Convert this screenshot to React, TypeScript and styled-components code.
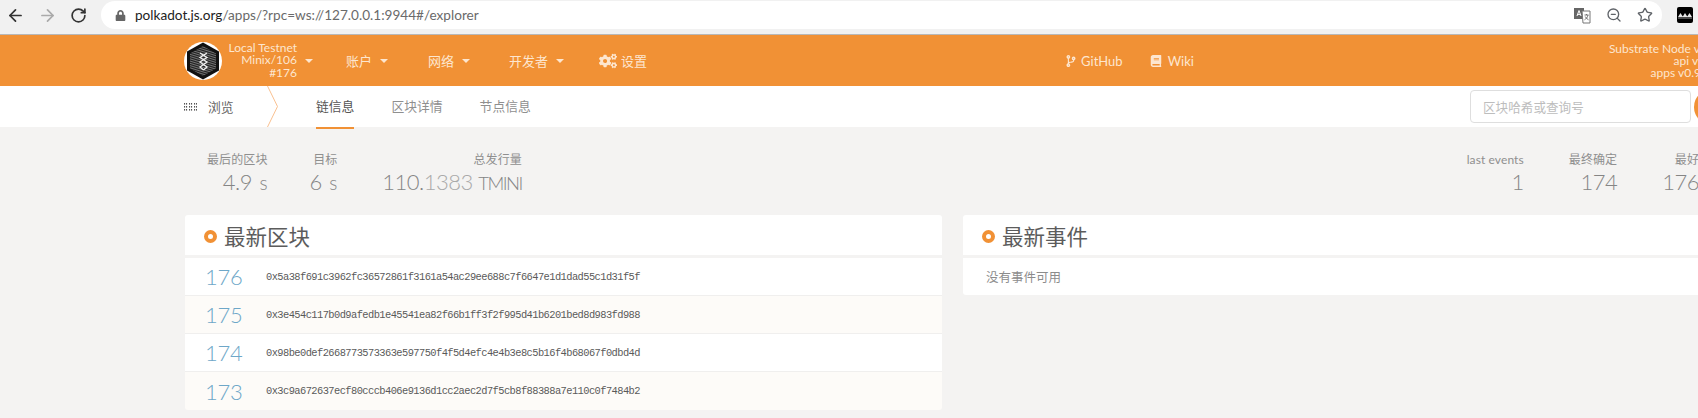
import React from "react";
import styled, { createGlobalStyle } from "styled-components";
import { ArrowLeft, ArrowRight, RotateCw, ZoomOut, Star } from "lucide-react";
import { FaLock, FaCogs, FaCodeBranch, FaBook } from "react-icons/fa";

const Global = createGlobalStyle`
  html, body { margin: 0; padding: 0; background: #f4f3f2; overflow: hidden; }
  body { font-family: Lato, "Noto Sans CJK SC", sans-serif; }
`;

const Frame = styled.div`
  width: 1698px;
  height: 418px;
  overflow: hidden;
  background: #f4f3f2;
`;

const BrowserBar = styled.div`
  display: flex;
  align-items: flex-start;
  height: 34px;
  background: #f1f1f1;
  border-bottom: 1px solid #b8b8b8;
  box-sizing: content-box;
`;

const NavButtons = styled.div`
  display: flex;
  align-items: center;
  height: 30px;
  width: 101px;
  padding-left: 6px;
  gap: 13px;
  box-sizing: border-box;
`;

const Omnibox = styled.div`
  display: flex;
  align-items: center;
  width: 1561px;
  height: 28px;
  margin-top: 1px;
  border-radius: 14px;
  background: #fff;
  padding: 0 9px 0 14px;
  box-sizing: border-box;
`;

const UrlText = styled.div`
  margin-left: 9px;
  font-size: 13.6px;
  color: #6a6a6a;
  white-space: nowrap;
  flex: 1;
  b { font-weight: 400; color: #222; }
`;

const OmniIcons = styled.div`
  display: flex;
  align-items: center;
  gap: 15px;
  color: #5f6368;
`;

const Extension = styled.div`
  width: 16px;
  height: 16px;
  margin: 7px 0 0 15px;
  background: #000;
  border-radius: 2px;
`;

const TopNav = styled.div`
  display: flex;
  align-items: center;
  width: 1760px;
  height: 51px;
  padding-left: 184px;
  box-sizing: border-box;
  background: #f19135;
  color: #fde6cf;
  font-size: 13px;
`;

const ChainInfo = styled.div`
  width: 69px;
  margin-left: 6px;
  font-size: 12px;
  line-height: 12.5px;
  text-align: right;
  white-space: nowrap;
`;

const Caret = styled.span`
  width: 0;
  height: 0;
  margin-left: 8px;
  border-left: 4px solid transparent;
  border-right: 4px solid transparent;
  border-top: 4px solid #fde6cf;
`;

const MenuItem = styled.div<{ $gap: number }>`
  display: flex;
  align-items: center;
  margin-left: ${(p) => p.$gap}px;
  white-space: nowrap;
`;

const MenuLabel = styled.span`
  margin-left: 4px;
`;

const Links = styled.div`
  display: flex;
  align-items: center;
  margin-left: 418px;
`;

const LinkItem = styled.div<{ $gap: number; $iconGap: number }>`
  display: flex;
  align-items: center;
  gap: ${(p) => p.$iconGap}px;
  margin-left: ${(p) => p.$gap}px;
  font-size: 13px;
`;

const Versions = styled.div`
  margin-left: auto;
  padding-right: 10px;
  font-size: 12px;
  line-height: 12px;
  text-align: right;
  white-space: nowrap;
`;

const SubNav = styled.div`
  display: flex;
  align-items: center;
  width: 1760px;
  height: 41px;
  padding-left: 184px;
  box-sizing: border-box;
  background: #fff;
  font-size: 12.8px;
`;

const SectionName = styled.div`
  display: flex;
  align-items: center;
  width: 83px;
  gap: 11px;
  color: #666;
`;

const Chevron = styled.svg`
  display: block;
`;

const Tab = styled.div<{ $active?: boolean; $gap: number }>`
  position: relative;
  margin-left: ${(p) => p.$gap}px;
  color: ${(p) => (p.$active ? "#555" : "#8f8f8f")};
  height: 41px;
  line-height: 41px;
  width: fit-content;
  &::after {
    content: "";
    display: ${(p) => (p.$active ? "block" : "none")};
    position: absolute;
    left: 0;
    right: 0;
    top: 41px;
    height: 2px;
    background: #f19135;
  }
`;

const Search = styled.div`
  display: flex;
  align-items: center;
  margin-left: auto;
  height: 33px;
  width: 221px;
  padding-left: 12px;
  box-sizing: border-box;
  background: #fff;
  border: 1px solid #dedede;
  border-radius: 4px;
  color: #bdbdbd;
  font-size: 12.6px;
`;

const SearchButton = styled.div`
  width: 36px;
  height: 36px;
  margin: 0 30px 0 3px;
  border-radius: 50%;
  background: #f19135;
`;

const Main = styled.div`
  width: 1720px;
  padding-left: 185px;
  box-sizing: border-box;
`;

const Summary = styled.div`
  display: flex;
  height: 88px;
  padding: 25px 21px 0 22px;
  box-sizing: border-box;
`;

const Stat = styled.div<{ $gap?: number; $auto?: boolean }>`
  margin-left: ${(p) => (p.$auto ? "auto" : `${p.$gap ?? 0}px`)};
  text-align: right;
  white-space: nowrap;
`;

const StatLabel = styled.div`
  font-size: 12px;
  line-height: 16px;
  letter-spacing: 0.1px;
  color: #8f8f8f;
`;

const StatValue = styled.div`
  font-size: 22px;
  line-height: 28px;
  font-weight: 300;
  letter-spacing: -0.5px;
  color: #858585;
  i { font-style: normal; color: #a9a9a9; }
`;

const Unit = styled.small<{ $tight?: boolean }>`
  margin-left: ${(p) => (p.$tight ? 0 : 2)}px;
  font-size: ${(p) => (p.$tight ? 18.5 : 19)}px;
  letter-spacing: ${(p) => (p.$tight ? -1.5 : 0)}px;
`;

const Columns = styled.div`
  display: grid;
  grid-template-columns: 757px 757px;
  column-gap: 21px;
`;

const CardHeader = styled.div`
  display: flex;
  align-items: center;
  height: 40px;
  margin-bottom: 3px;
  padding-left: 19px;
  background: #fff;
  border-radius: 3px 3px 0 0;
`;

const Dot = styled.span`
  width: 5px;
  height: 5px;
  margin-top: 2px;
  border: 4px solid #f19135;
  border-radius: 50%;
  background: #fff;
`;

const CardTitle = styled.h2`
  margin: 1px 0 0 7px;
  font-size: 21.5px;
  font-weight: 400;
  color: #5c5c5c;
`;

const Row = styled.div<{ $alt?: boolean }>`
  display: flex;
  align-items: center;
  height: 37px;
  padding-left: 20px;
  border-bottom: 1px solid #f0efee;
  background: ${(p) => (p.$alt ? "#fdfbf8" : "#fff")};
  &:last-child { border-bottom: 0; height: 38px; border-radius: 0 0 3px 3px; }
`;

const BlockNo = styled.div`
  width: 61px;
  font-size: 22px;
  font-weight: 300;
  letter-spacing: -0.3px;
  color: #6ea7c8;
`;

const Hash = styled.div`
  font-family: "Liberation Mono", monospace;
  font-size: 10.4px;
  letter-spacing: -0.57px;
  color: #5a5a5a;
`;

const Empty = styled.div`
  display: flex;
  align-items: center;
  height: 37px;
  padding-left: 23px;
  background: #fff;
  border-radius: 0 0 3px 3px;
  font-size: 12.5px;
  color: #8c8c8c;
`;

const HEX = "M19 0.5 L35 9.5 L35 28.5 L19 37.5 L3 28.5 L3 9.5 Z";

const Logo = () => (
  <svg width="38" height="38" viewBox="0 0 38 38">
    <defs>
      <clipPath id="hexClip">
        <path d="M19 4 L32 11.5 L32 26.5 L19 34 L6 26.5 L6 11.5 Z" />
      </clipPath>
    </defs>
    <circle cx="19" cy="19" r="19" fill="#fff" />
    <path d={HEX} fill="#111" />
    <g stroke="#a0a0a0" strokeWidth="0.7" clipPath="url(#hexClip)">
      {Array.from({ length: 18 }, (_, i) => (
        <line key={i} x1="3" y1={8 + i * 1.8} x2="35" y2={i * 1.8} />
      ))}
    </g>
    <path d="M16 11 L23 15.5 L16 20 L23 25 L19.5 28 M23 11 L16 15.5 L23 20 L16 25 L19.5 28" fill="none" stroke="#f2f2f2" strokeWidth="1.3" />
  </svg>
);

const GridIcon = () => (
  <svg width="13" height="8" viewBox="0 0 13 8" fill="#555">
    {[0, 3, 6].map((y) =>
      [0, 2, 5, 7, 10, 12].map((x) => <rect key={`${x}-${y}`} x={x} y={y} width="1.1" height="1.6" />)
    )}
  </svg>
);

const TranslateIcon = () => (
  <svg width="17" height="17" viewBox="0 0 17 17">
    <rect x="0" y="1" width="10" height="11" fill="#666" />
    <path d="M8 4 H16 V16 H9 Z" fill="#fff" stroke="#777" strokeWidth="1" />
    <path d="M3 9 L5 3.5 L7 9 M3.6 7.4 H6.4" fill="none" stroke="#fff" strokeWidth="1" />
    <path d="M10.5 8 H14.5 M12.5 7 V8 M14 8 C13.5 10.5 12 12 10.5 12.8 M11.2 9.5 C12 11 13 12 14.5 12.8" fill="none" stroke="#666" strokeWidth="0.9" />
  </svg>
);

const ExtMark = () => (
  <svg width="16" height="16" viewBox="0 0 16 16" style={{ display: "block" }}>
    <path d="M1 10 L3.5 6 L6 10 Z M5.5 10 L8 6 L10.5 10 Z M10 10 L12.5 6 L15 10 Z" fill="#e8e8e8" />
    <path d="M1 11 H15" stroke="#999" strokeWidth="1" />
  </svg>
);

const blocks = [
  ["176", "0x5a38f691c3962fc36572861f3161a54ac29ee688c7f6647e1d1dad55c1d31f5f"],
  ["175", "0x3e454c117b0d9afedb1e45541ea82f66b1ff3f2f995d41b6201bed8d983fd988"],
  ["174", "0x98be0def2668773573363e597750f4f5d4efc4e4b3e8c5b16f4b68067f0dbd4d"],
  ["173", "0x3c9a672637ecf80cccb406e9136d1cc2aec2d7f5cb8f88388a7e110c0f7484b2"],
];

export default function App() {
  return (
    <Frame>
      <Global />
      <BrowserBar>
        <NavButtons>
          <ArrowLeft size={19} color="#333" strokeWidth={2.2} />
          <ArrowRight size={19} color="#aaa" strokeWidth={2.2} />
          <RotateCw size={17} color="#333" strokeWidth={2.4} />
        </NavButtons>
        <Omnibox>
          <FaLock size={11} color="#666" />
          <UrlText>
            <b>polkadot.js.org</b>/apps/?rpc=ws://127.0.0.1:9944#/explorer
          </UrlText>
          <OmniIcons>
            <TranslateIcon />
            <ZoomOut size={16} />
            <Star size={16} />
          </OmniIcons>
        </Omnibox>
        <Extension>
          <ExtMark />
        </Extension>
      </BrowserBar>
      <TopNav>
        <Logo />
        <ChainInfo>
          Local Testnet
          <br />
          Minix/106
          <br />
          #176
        </ChainInfo>
        <Caret />
        <MenuItem $gap={33}>
          账户
          <Caret />
        </MenuItem>
        <MenuItem $gap={40}>
          网络
          <Caret />
        </MenuItem>
        <MenuItem $gap={39}>
          开发者
          <Caret />
        </MenuItem>
        <MenuItem $gap={35}>
          <FaCogs size={18} />
          <MenuLabel>设置</MenuLabel>
        </MenuItem>
        <Links>
          <LinkItem $gap={0} $iconGap={4}>
            <FaCodeBranch size={12} />
            GitHub
          </LinkItem>
          <LinkItem $gap={27} $iconGap={6}>
            <FaBook size={12} />
            Wiki
          </LinkItem>
        </Links>
        <Versions>
          Substrate Node v3.0.0-dev
          <br />
          api v3.11.1-16
          <br />
          apps v0.95.1-1265
        </Versions>
      </TopNav>
      <SubNav>
        <SectionName>
          <GridIcon />
          浏览
        </SectionName>
        <Chevron width="12" height="41" viewBox="0 0 12 41">
          <path d="M0.5 0 L10.5 20.5 L0.5 41" fill="none" stroke="#f9c090" strokeWidth="1" />
        </Chevron>
        <Tab $active $gap={37}>链信息</Tab>
        <Tab $gap={37}>区块详情</Tab>
        <Tab $gap={37}>节点信息</Tab>
        <Search>区块哈希或查询号</Search>
        <SearchButton />
      </SubNav>
      <Main>
        <Summary>
          <Stat>
            <StatLabel>最后的区块</StatLabel>
            <StatValue>4.9 <Unit>s</Unit></StatValue>
          </Stat>
          <Stat $gap={42}>
            <StatLabel>目标</StatLabel>
            <StatValue>6 <Unit>s</Unit></StatValue>
          </Stat>
          <Stat $gap={45}>
            <StatLabel>总发行量</StatLabel>
            <StatValue>110.<i>1383</i> <Unit $tight>TMINI</Unit></StatValue>
          </Stat>
          <Stat $auto>
            <StatLabel>last events</StatLabel>
            <StatValue>1</StatValue>
          </Stat>
          <Stat $gap={45}>
            <StatLabel>最终确定</StatLabel>
            <StatValue>174</StatValue>
          </Stat>
          <Stat $gap={45}>
            <StatLabel>最好</StatLabel>
            <StatValue>176</StatValue>
          </Stat>
        </Summary>
        <Columns>
          <section>
            <CardHeader>
              <Dot />
              <CardTitle>最新区块</CardTitle>
            </CardHeader>
            {blocks.map(([n, h], i) => (
              <Row key={n} $alt={i % 2 === 1}>
                <BlockNo>{n}</BlockNo>
                <Hash>{h}</Hash>
              </Row>
            ))}
          </section>
          <section>
            <CardHeader>
              <Dot />
              <CardTitle>最新事件</CardTitle>
            </CardHeader>
            <Empty>没有事件可用</Empty>
          </section>
        </Columns>
      </Main>
    </Frame>
  );
}
